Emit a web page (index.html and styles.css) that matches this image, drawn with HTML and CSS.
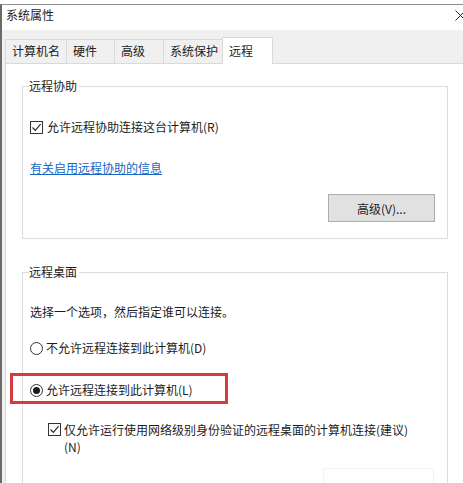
FILE: index.html
```html
<!DOCTYPE html>
<html lang="zh-CN">
<head>
<meta charset="utf-8">
<title>系统属性</title>
<link rel="stylesheet" href="styles.css">
</head>
<body>
<div class="window">
  <div class="titlebar">
    <span class="title">系统属性</span>
    <svg class="close" width="11" height="11" viewBox="0 0 11 11"><path d="M0.5 0.5 L10.5 10.5 M10.5 0.5 L0.5 10.5" stroke="#222" stroke-width="1" fill="none"/></svg>
  </div>
  <div class="client">
    <div class="tabs">
      <div class="tab t1">计算机名</div>
      <div class="tab t2">硬件</div>
      <div class="tab t3">高级</div>
      <div class="tab t4">系统保护</div>
      <div class="tab t5 selected">远程</div>
    </div>
    <div class="panel">
      <fieldset class="group g1">
        <legend>远程协助</legend>
        <label class="row r-check1"><span class="checkbox checked"><svg width="11" height="11" viewBox="0 0 11 11"><path d="M1.5 5.5 L4.3 8.4 L9.6 2.2" stroke="#222" stroke-width="1.1" fill="none"/></svg></span><span>允许远程协助连接这台计算机(R)</span></label>
        <a class="link" href="#">有关启用远程协助的信息</a>
        <div class="btnrow"><button class="btn">高级(V)...</button></div>
      </fieldset>
      <fieldset class="group g2">
        <legend>远程桌面</legend>
        <p class="hint">选择一个选项，然后指定谁可以连接。</p>
        <label class="row r-radio1"><span class="radio"></span><span>不允许远程连接到此计算机(D)</span></label>
        <label class="row r-radio2"><span class="radio on"></span><span>允许远程连接到此计算机(L)</span><span class="highlight"></span></label>
        <label class="row r-check2"><span class="checkbox checked"><svg width="11" height="11" viewBox="0 0 11 11"><path d="M1.5 5.5 L4.3 8.4 L9.6 2.2" stroke="#222" stroke-width="1.1" fill="none"/></svg></span><span class="wrap">仅允许运行使用网络级别身份验证的远程桌面的计算机连接(建议)<br>(N)</span></label>
        <div class="btnrow2"><span class="ghostbtn"></span></div>
      </fieldset>
    </div>
  </div>
</div>
</body>
</html>
```

FILE: styles.css
```css
* { box-sizing: border-box; }
html, body {
  margin: 0;
  padding: 0;
  background: #ffffff;
  width: 463px;
  height: 483px;
  overflow: hidden;
}
body {
  font-family: "Noto Sans CJK SC", "Microsoft YaHei", "Noto Sans", sans-serif;
  font-size: 12px;
  color: #1c1c1c;
}
.window {
  margin-top: 4px;
  border-top: 1px solid #8f8f8f;
  border-left: 2px solid #6a6a6a;
  height: 479px;
  display: flex;
  flex-direction: column;
  overflow: hidden;
}
.titlebar {
  height: 25px;
  flex: none;
  background: #ffffff;
  display: flex;
  justify-content: space-between;
  align-items: flex-start;
  padding-left: 4px;
}
.title {
  line-height: 20px;
}
.close {
  margin-top: 5px;
  margin-right: -3px;
}
.client {
  flex: 1;
  min-height: 0;
  background: #f0f0f0;
  padding-left: 3px;
  padding-top: 7px;
  display: flex;
  flex-direction: column;
  overflow: hidden;
}
.tabs {
  display: flex;
  align-items: flex-end;
  height: 26px;
  flex: none;
}
.tab {
  height: 24px;
  line-height: 22px;
  border: 1px solid #d9d9d9;
  border-bottom: none;
  padding-left: 6px;
  margin-left: -1px;
  background: #f0f0f0;
  white-space: nowrap;
}
.t1 { width: 62px; margin-left: 0; }
.t2 { width: 49px; }
.t3 { width: 50px; }
.t4 { width: 60px; }
.t5 { width: 51px; }
.tab.selected {
  height: 27px;
  margin-bottom: -1px;
  background: #ffffff;
  position: relative;
  z-index: 1;
  line-height: 25px;
}
.panel {
  flex: 1;
  min-height: 0;
  overflow: hidden;
  background: #ffffff;
  border-top: 1px solid #d9d9d9;
  border-left: 1px solid #d9d9d9;
  padding-left: 16px;
  padding-top: 14px;
}
.group {
  margin: 0;
  width: 426px;
  border: 1px solid #dcdcdc;
  padding: 0 0 0 7px;
  min-width: 0;
}
.group legend {
  margin-left: -1px;
  padding: 0 2px 0 0;
  line-height: 16px;
  height: 16px;
}
.row {
  display: flex;
  align-items: center;
  line-height: 16px;
  height: 16px;
  position: relative;
}
.checkbox {
  width: 13px;
  height: 13px;
  border: 1px solid #333333;
  background: #ffffff;
  display: inline-flex;
  align-items: center;
  justify-content: center;
  margin-right: 4px;
  flex: none;
}
.radio {
  width: 13px;
  height: 13px;
  border: 1px solid #333333;
  border-radius: 50%;
  background: #ffffff;
  margin-right: 3px;
  flex: none;
  display: inline-flex;
  align-items: center;
  justify-content: center;
}
.radio.on::after {
  content: "";
  width: 7px;
  height: 7px;
  border-radius: 50%;
  background: #1c1c1c;
}
.r-check1 { margin-top: 25px; }
.link {
  display: block;
  margin-top: 25px;
  line-height: 16px;
  color: #1466c4;
  text-decoration: underline;
  width: max-content;
}
.btnrow {
  display: flex;
  justify-content: flex-end;
  padding-right: 12px;
  margin-top: 18px;
  padding-bottom: 16px;
}
.btn {
  width: 107px;
  height: 28px;
  background: #e1e1e1;
  border: 1px solid #adadad;
  font-family: inherit;
  font-size: 12px;
  color: #1c1c1c;
  padding: 0;
}
.g2 { margin-top: 25px; height: 230px; }
.hint {
  margin: 24px 0 0 0;
  line-height: 16px;
}
.r-radio1 { margin-top: 20px; }
.r-radio2 { margin-top: 26px; }
.highlight {
  position: absolute;
  left: -20px;
  top: -9px;
  width: 218px;
  height: 31px;
  border: 3px solid #d8393c;
  pointer-events: none;
}
.r-check2 {
  margin-top: 23px;
  margin-left: 18px;
  align-items: flex-start;
  height: auto;
  line-height: 17px;
}
.r-check2 .checkbox { margin-top: 2px; margin-right: 3px; }
.wrap { display: block; }
.btnrow2 {
  display: flex;
  justify-content: flex-end;
  padding-right: 13px;
  margin-top: 13px;
}
.ghostbtn {
  width: 111px;
  height: 28px;
  border: 1px solid #f1f4f7;
  border-bottom: none;
}
```
